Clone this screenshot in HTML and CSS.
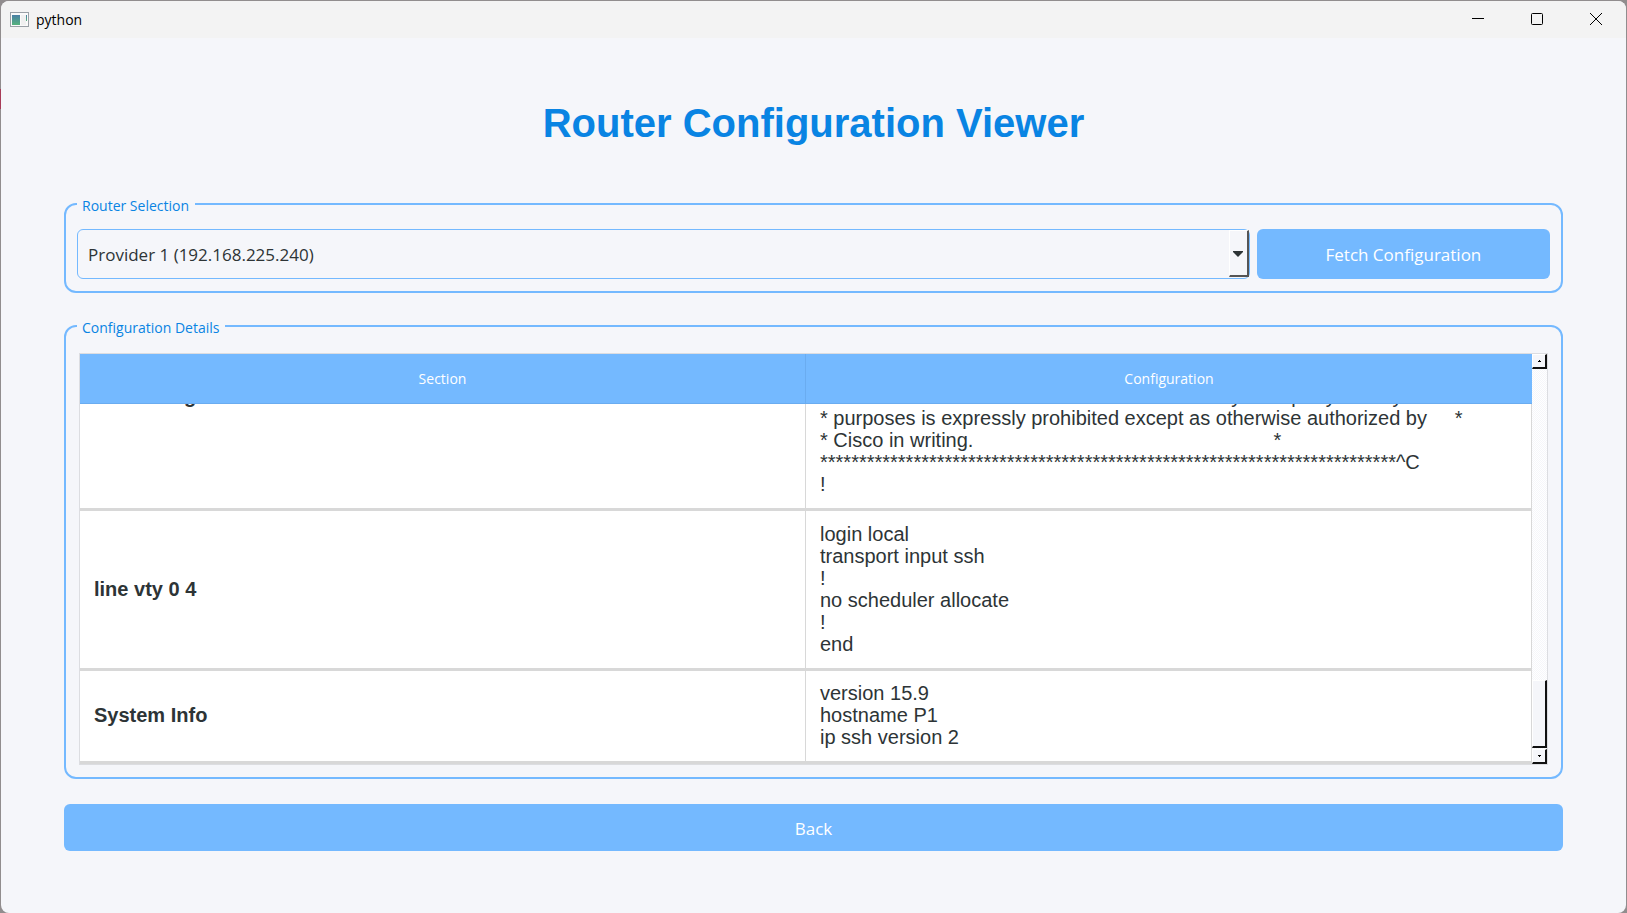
FILE: index.html
```
<!DOCTYPE html>
<html lang="en">
<head>
<meta charset="utf-8">
<title>python</title>
<link rel="stylesheet" href="styles.css">
</head>
<body>
<div class="window">
  <header class="titlebar">
    <svg class="app-icon" width="19" height="16" viewBox="0 0 19 16" aria-hidden="true">
      <defs><linearGradient id="pane" x1="0" y1="0" x2="0" y2="1"><stop offset="0" stop-color="#4a7fa5"/><stop offset="1" stop-color="#55b27c"/></linearGradient></defs>
      <rect x="0.500" y="0.500" width="18" height="14" fill="#fafafa" stroke="#9aa0a6"/>
      <rect x="2" y="3" width="8" height="10" fill="url(#pane)"/>
      <rect x="11" y="3" width="5" height="10" fill="#f0f0f0"/>
      <rect x="16" y="3" width="1" height="6" fill="url(#pane)"/>
    </svg>
    <span class="app-name">python</span>
    <div class="window-buttons">
      <button class="window-button" aria-label="Minimize"><svg width="14" height="14" viewBox="0 0 14 14"><path d="M1 6.500H13" stroke="#000" fill="none"/></svg></button>
      <button class="window-button" aria-label="Maximize"><svg width="14" height="14" viewBox="0 0 14 14"><rect x="1.500" y="1.500" width="11" height="11" rx="1" stroke="#000" fill="none"/></svg></button>
      <button class="window-button" aria-label="Close"><svg width="14" height="14" viewBox="0 0 14 14"><path d="M1 1L13 13M13 1L1 13" stroke="#000" fill="none"/></svg></button>
    </div>
  </header>
  <main class="content">
    <h1 class="title">Router Configuration Viewer</h1>
    <fieldset class="group">
      <legend class="group-title">Router Selection</legend>
      <div class="selection-row">
        <div class="combo">
          <select class="combo-box" aria-label="Router"><option>Provider 1 (192.168.225.240)</option></select>
          <span class="combo-arrow"><svg width="10" height="6" viewBox="0 0 10 6"><path d="M0 0H10V1L5 6L0 1Z" fill="#2d3436"/></svg></span>
        </div>
        <button class="button fetch">Fetch Configuration</button>
      </div>
    </fieldset>
    <fieldset class="group details">
      <legend class="group-title">Configuration Details</legend>
      <div class="table-frame">
        <div class="table-scroll">
          <table class="config-table">
            <thead><tr><th>Section</th><th>Configuration</th></tr></thead>
            <tbody>
              <tr><td class="section">banner login</td><td class="lines">**************************************************************************
* IOSv is strictly limited to use for evaluation, demonstration and IOS  *
* education. IOSv is provided as-is and is not supported by Cisco's      *
* Technical Advisory Center. Any use or disclosure, in whole or in part, *
* of the IOSv Software or Documentation to any third party for any       *
* purposes is expressly prohibited except as otherwise authorized by     *
* Cisco in writing.                                                      *
**************************************************************************^C
!</td></tr>
              <tr><td class="section">line vty 0 4</td><td class="lines">login local
transport input ssh
!
no scheduler allocate
!
end</td></tr>
              <tr><td class="section">System Info</td><td class="lines">version 15.9
hostname P1
ip ssh version 2</td></tr>
            </tbody>
          </table>
        </div>
        <div class="scrollbar">
          <button class="scroll-step" aria-label="Scroll up"><svg width="3" height="2" viewBox="0 0 3 2"><path d="M1 0H2V1H3V2H0V1H1Z"/></svg></button>
          <div class="scroll-track"><div class="scroll-thumb"></div></div>
          <button class="scroll-step" aria-label="Scroll down"><svg width="3" height="2" viewBox="0 0 3 2"><path d="M0 0H3V1H2V2H1V1H0Z"/></svg></button>
        </div>
      </div>
    </fieldset>
    <button class="button back">Back</button>
  </main>
</div>
</body>
</html>
```
FILE: styles.css
```
* { box-sizing: border-box; }
body {
  margin: 0;
  height: 100vh;
  padding: 1px 1px 0;
  background: linear-gradient(90deg, transparent 50%, #918d8e 50%), linear-gradient(#918d8e 89px, #a83c58 89px, #a83c58 109px, #918d8e 109px);
  color: #2d3436;
  font-family: "Open Sans", "Noto Sans", sans-serif;
  overflow: hidden;
}
.window {
  height: 100%;
  display: flex;
  flex-direction: column;
  background: #f5f6fa;
  border-radius: 8px;
  overflow: hidden;
}
.titlebar {
  height: 37px;
  display: flex;
  align-items: center;
  padding-left: 9px;
  background: #f3f3f3;
  color: #000;
}
.app-name { margin-left: 7px; font-size: 14px; line-height: 20px; }
.window-buttons {
  margin-left: auto;
  display: flex;
  height: 100%;
  padding: 0 1px 2px 0;
}
.window-button {
  width: 59px;
  padding: 0;
  border: 0;
  background: none;
  display: flex;
  align-items: center;
  justify-content: center;
}
.content {
  flex: 1;
  min-height: 0;
  display: flex;
  flex-direction: column;
  padding: 62px 63px;
}
.title {
  margin: 0 0 46px;
  text-align: center;
  font: bold 40px/46px "Liberation Sans", Arial, sans-serif;
  color: #0984e3;
}
.group {
  margin: 0;
  min-width: 0;
  padding: 13px 11px 12px;
  border: 2px solid #74b9ff;
  border-radius: 12px;
}
.group-title {
  padding: 4px 6px 0 5px;
  font-size: 14px;
  line-height: 20px;
  color: #0984e3;
}
.selection-row { display: grid; grid-template-columns: 4fr 1fr; gap: 7px; height: 50px; }
.combo { position: relative; display: flex; }
.combo-box {
  width: 100%;
  padding: 2px 30px 0 10px;
  border: 1px solid #74b9ff;
  border-radius: 6px;
  background: #f5f6fa;
  appearance: none;
  color: inherit;
  font: 17px/24px "Open Sans", "Noto Sans", sans-serif;
}
.combo-arrow {
  position: absolute;
  top: 1px;
  right: 1px;
  bottom: 2px;
  width: 20px;
  display: flex;
  align-items: center;
  justify-content: center;
  padding-top: 2px;
  background: #f5f6fa;
  border: 1px solid #fff;
  border-right: 2px solid #555;
  border-bottom: 2px solid #555;
  pointer-events: none;
}
.button {
  padding: 2px 12px 0;
  border: 0;
  border-radius: 6px;
  background: #74b9ff;
  color: #fff;
  font: 17px/24px "Open Sans", "Noto Sans", sans-serif;
}
.details {
  flex: 1;
  min-height: 0;
  margin-top: 21px;
  padding-top: 15px;
  display: flex;
}
.table-frame {
  flex: 1;
  min-width: 0;
  margin: 0 2px;
  display: flex;
  border: 1px solid #dcdde1;
}
.table-scroll {
  flex: 1;
  min-width: 0;
  display: flex;
  flex-direction: column-reverse;
  overflow-y: auto;
  scrollbar-width: none;
}
.config-table {
  width: 100%;
  table-layout: fixed;
  border-collapse: separate;
  border-spacing: 0;
  background: #fff;
  font: 20px/22px "Liberation Sans", Arial, sans-serif;
}
.config-table th {
  position: sticky;
  top: 0;
  height: 50px;
  padding: 0;
  background: #74b9ff;
  border-right: 1px solid #6aacf0;
  border-bottom: 1px solid #6aacf0;
  color: #fff;
  font: 14px/20px "Open Sans", "Noto Sans", sans-serif;
}
.config-table th:last-child { border-right: 0; }
.config-table td {
  padding: 12px 14px 13px;
  border-right: 1px solid #d8d8d8;
  border-bottom: 3px solid #d8d8d8;
  vertical-align: middle;
}
.config-table tr:last-child td { padding-top: 11px; }
.section { font-weight: bold; }
.lines { white-space: pre; overflow: hidden; }
.scrollbar {
  width: 15px;
  display: flex;
  flex-direction: column;
  background: repeating-conic-gradient(#fff 0 25%, #f5f6fa 0 50%) 0 0 / 2px 2px;
}
.scroll-step, .scroll-thumb {
  background: #f5f6fa;
  border: 1px solid #fff;
  border-right: 2px solid #111;
  border-bottom: 2px solid #111;
}
.scroll-step {
  height: 15px;
  padding: 0;
  display: flex;
  align-items: center;
  justify-content: center;
}
.scroll-track {
  flex: 1;
  display: flex;
  flex-direction: column;
  justify-content: flex-end;
  padding-bottom: 1px;
}
.scroll-thumb { height: 18%; }
.back { height: 47px; margin-top: 25px; flex: none; }
```
